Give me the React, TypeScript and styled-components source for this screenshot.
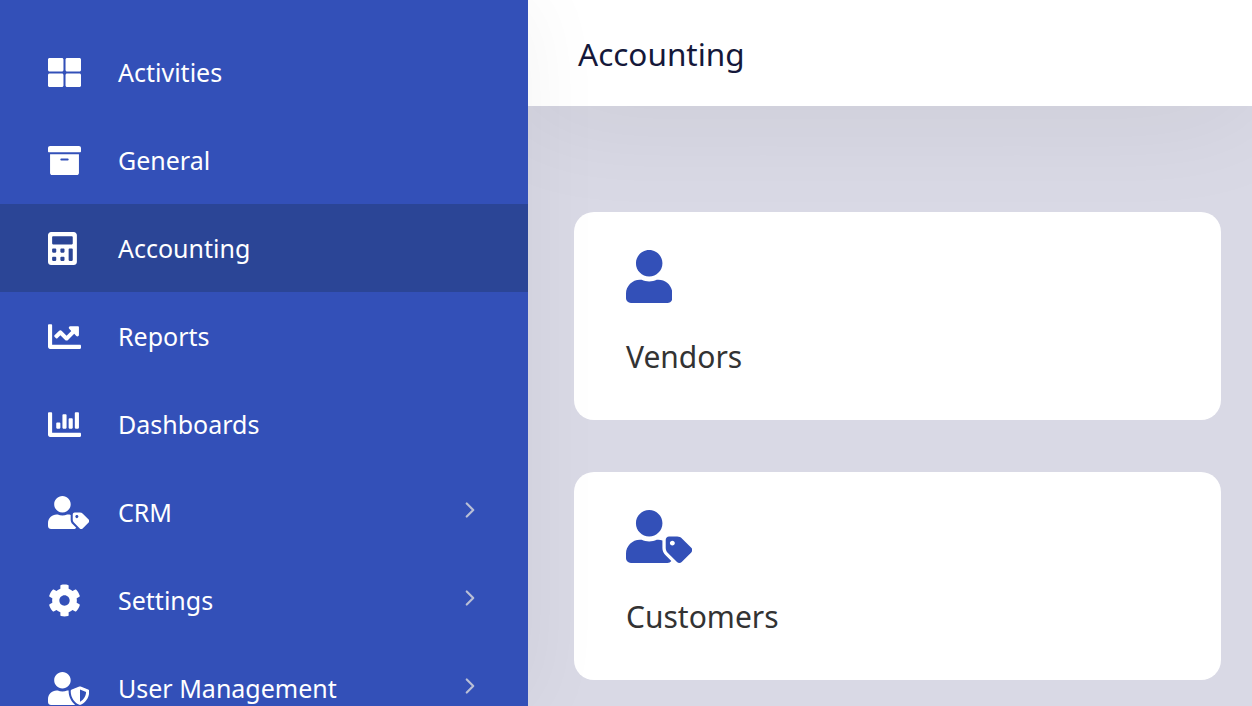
import React from "react";
import styled, { createGlobalStyle } from "styled-components";
import { ChevronRight } from "lucide-react";
import {
    FaArchive,
    FaCalculator,
    FaChartBar,
    FaChartLine,
    FaCog,
    FaThLarge,
    FaUser,
    FaUserShield,
    FaUserTag,
} from "react-icons/fa";

const GlobalStyle = createGlobalStyle`
    html, body {
        margin: 0;
        height: 100%;
        overflow: hidden;
        font-family: "Noto Sans", "Open Sans", sans-serif;
    }
`;

const Layout = styled.div`
    display: flex;
    width: 100%;
    height: 100vh;
    overflow: hidden;
    background: #d9d9e5;
`;

const Sidebar = styled.nav`
    position: relative;
    z-index: 2;
    flex: 0 0 528px;
    padding-top: 28px;
    background: #3350b8;
    box-shadow: 0 0 80px rgba(0, 0, 0, 0.05);
`;

const NavItem = styled.div<{ $active?: boolean }>`
    display: flex;
    align-items: center;
    height: 88px;
    padding: 0 45px 0 48px;
    color: #fff;
    background: ${(p) => (p.$active ? "#2b4596" : "transparent")};
`;

// font awesome glyphs are 1em high, their width depends on the glyph
const NavIcon = styled.span<{ $ratio: number }>`
    display: flex;
    flex: 0 0 70px;
    align-items: center;
    font-size: 33px;

    svg {
        flex: none;
        width: ${(p) => p.$ratio}em;
        height: 1em;
    }
`;

const NavLabel = styled.span`
    flex: 1;
    font-size: 25px;
`;

const Chevron = styled(ChevronRight)`
    margin-top: -4px;
    color: #b9bfd6;
`;

const Main = styled.main`
    flex: 1;
    min-width: 0;
`;

const Header = styled.header`
    display: flex;
    align-items: center;
    height: 106px;
    padding-left: 50px;
    background: #fff;
    box-shadow: 0 0 120px rgba(0, 0, 0, 0.08);
`;

const Title = styled.h1`
    margin: 0;
    font-size: 31.5px;
    font-weight: 400;
    color: #15183a;
`;

const CardList = styled.div`
    display: flex;
    flex-direction: column;
    gap: 52px;
    padding: 106px 31px 0 46px;
`;

const Card = styled.div`
    display: flex;
    flex-direction: column;
    align-items: flex-start;
    height: 208px;
    box-sizing: border-box;
    padding: 38px 52px 0;
    background: #fff;
    border-radius: 20px;
`;

const CardIcon = styled.span<{ $ratio: number }>`
    display: flex;
    font-size: 53px;
    color: #3350b8;

    svg {
        flex: none;
        width: ${(p) => p.$ratio}em;
        height: 1em;
    }
`;

const CardLabel = styled.span`
    margin-top: 33px;
    font-size: 30px;
    color: #333;
`;

const navItems = [
    { label: "Activities", icon: <FaThLarge />, ratio: 1 },
    { label: "General", icon: <FaArchive />, ratio: 1 },
    { label: "Accounting", icon: <FaCalculator />, ratio: 0.875, active: true },
    { label: "Reports", icon: <FaChartLine />, ratio: 1 },
    { label: "Dashboards", icon: <FaChartBar />, ratio: 1 },
    { label: "CRM", icon: <FaUserTag />, ratio: 1.25, more: true },
    { label: "Settings", icon: <FaCog />, ratio: 1, more: true },
    { label: "User Management", icon: <FaUserShield />, ratio: 1.25, more: true },
];

export default function App() {
    return (
        <Layout>
            <GlobalStyle />
            <Sidebar>
                {navItems.map((item) => (
                    <NavItem key={item.label} $active={item.active}>
                        <NavIcon $ratio={item.ratio}>{item.icon}</NavIcon>
                        <NavLabel>{item.label}</NavLabel>
                        {item.more && <Chevron size={26} strokeWidth={2} />}
                    </NavItem>
                ))}
            </Sidebar>
            <Main>
                <Header>
                    <Title>Accounting</Title>
                </Header>
                <CardList>
                    <Card>
                        <CardIcon $ratio={0.875}>
                            <FaUser />
                        </CardIcon>
                        <CardLabel>Vendors</CardLabel>
                    </Card>
                    <Card>
                        <CardIcon $ratio={1.25}>
                            <FaUserTag />
                        </CardIcon>
                        <CardLabel>Customers</CardLabel>
                    </Card>
                </CardList>
            </Main>
        </Layout>
    );
}
